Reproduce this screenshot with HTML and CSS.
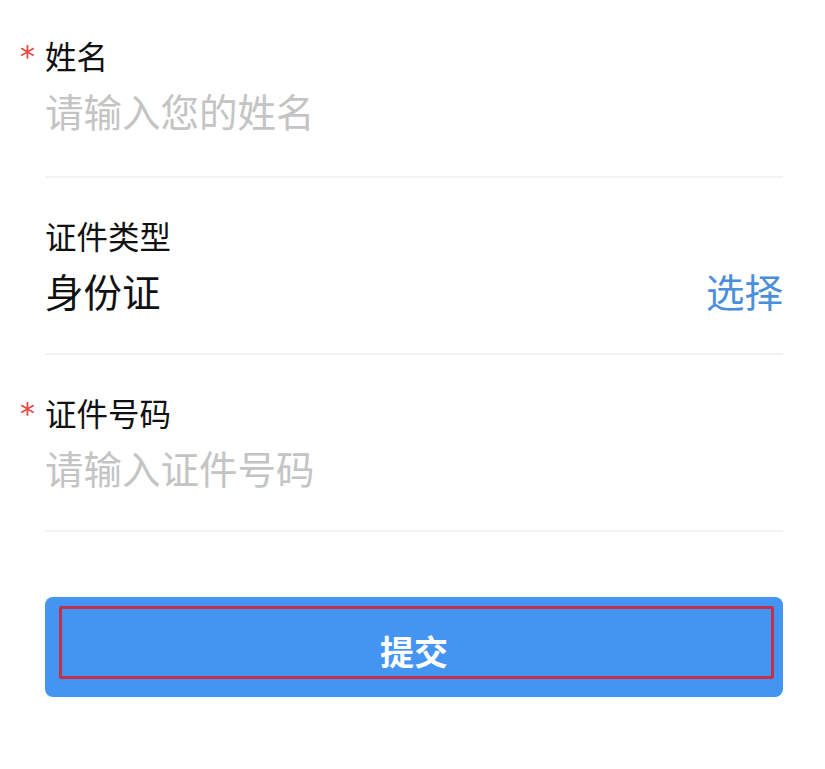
FILE: index.html
```html
<!DOCTYPE html>
<html lang="zh-CN">
<head>
<meta charset="utf-8">
<link rel="stylesheet" href="styles.css">
</head>
<body>
<div class="form">
  <div class="item first">
    <div class="label"><span class="req">*</span>姓名</div>
    <div class="value placeholder">请输入您的姓名</div>
  </div>
  <div class="item">
    <div class="label">证件类型</div>
    <div class="value row"><span>身份证</span><span class="link">选择</span></div>
  </div>
  <div class="item">
    <div class="label"><span class="req">*</span>证件号码</div>
    <div class="value placeholder">请输入证件号码</div>
  </div>
  <div class="btn">提交</div>
</div>
</body>
</html>
```
FILE: styles.css
```css
html, body {
  margin: 0;
  padding: 0;
  background: #ffffff;
}
body {
  font-family: "Noto Sans CJK SC", "Noto Sans", sans-serif;
  color: #111111;
}
.form {
  width: 738px;
  padding-left: 45px;
}
.item {
  padding-top: 37px;
  padding-bottom: 37px;
  border-bottom: 2px solid #f3f3f3;
}
.item.first {
  padding-top: 35px;
  padding-bottom: 40px;
}
.label {
  font-size: 31.5px;
  line-height: 40px;
  height: 40px;
}
.req {
  display: inline-block;
  width: 25px;
  margin-left: -25px;
  color: #e5473f;
  font-family: "DejaVu Sans", sans-serif;
  font-size: 30px;
  font-weight: 400;
  vertical-align: top;
  line-height: 44px;
}
.value {
  margin-top: 9px;
  font-size: 38.5px;
  line-height: 52px;
  height: 52px;
}
.placeholder {
  color: #c4c4c4;
}
.row {
  display: flex;
  justify-content: space-between;
}
.link {
  color: #4a8fdc;
}
.btn {
  position: relative;
  margin-top: 65px;
  height: 100px;
  box-sizing: border-box;
  padding-top: 6px;
  border-radius: 8px;
  background: #4494f2;
  color: #ffffff;
  font-size: 34px;
  font-weight: 700;
  display: flex;
  align-items: center;
  justify-content: center;
}
.btn::after {
  content: "";
  position: absolute;
  left: 14px;
  top: 9px;
  right: 9px;
  bottom: 18px;
  border: 3px solid #c3304a;
  border-radius: 2px;
}
```
